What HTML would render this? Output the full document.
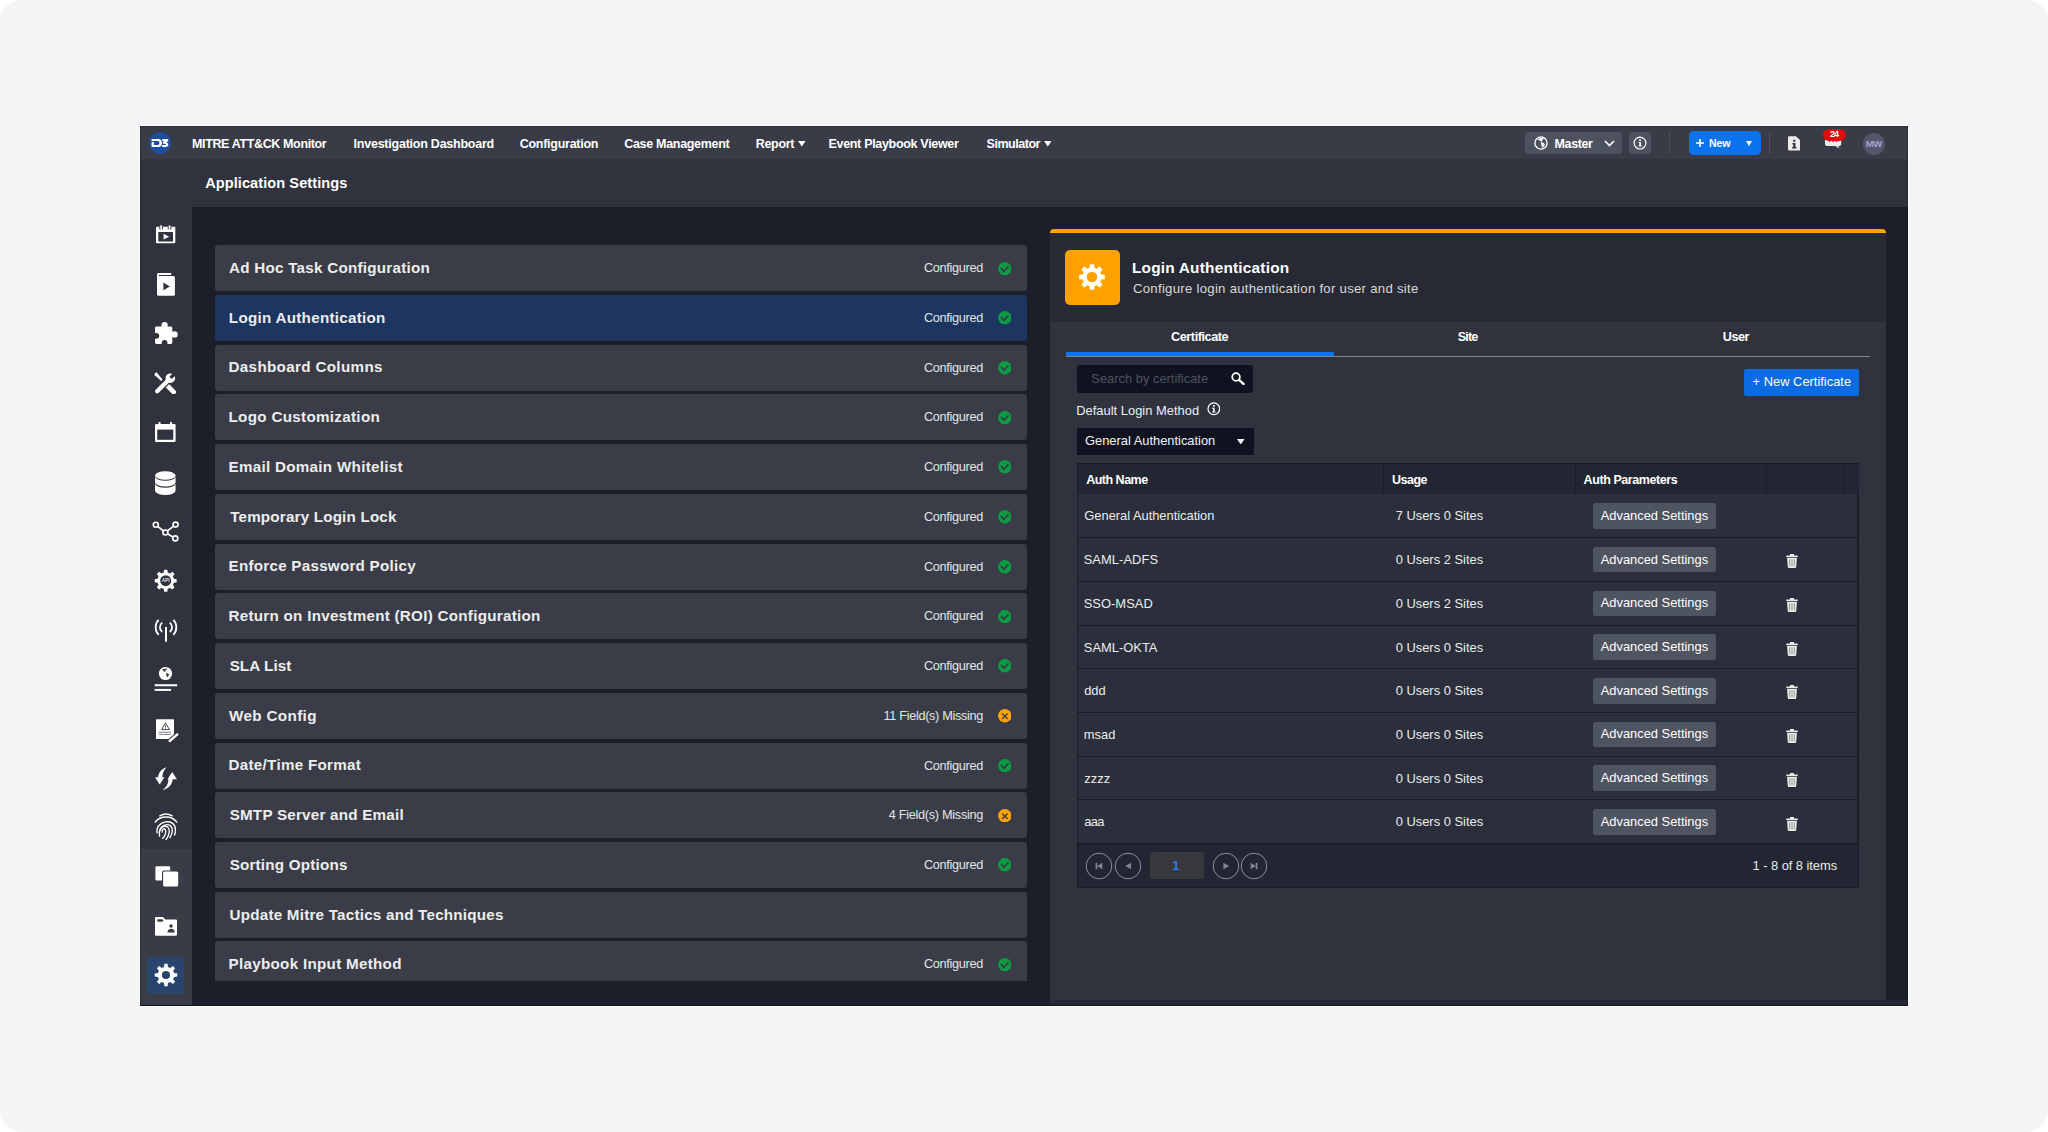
<!DOCTYPE html>
<html lang="en"><head><meta charset="utf-8"><title>Application Settings - Login Authentication</title>
<style>
html,body{margin:0;padding:0;background:#fff;}
body{width:2048px;height:1132px;position:relative;overflow:hidden;font-family:"Liberation Sans", sans-serif;}
#cv{position:absolute;left:0;top:0;width:2048px;height:1132px;background:#f3f4f6;border-radius:22px;overflow:hidden;}
#cv div,#cv svg,#cv span.t{position:absolute;display:block;}
#cv span.t{white-space:pre;}
</style></head>
<body>
<div id="cv">
<div style="left:139px;top:125px;width:1770px;height:882px;background:#ffffff;"></div>
<div style="left:140px;top:126px;width:1768px;height:880px;background:#1c1f2a;"></div>
<div style="left:140px;top:126px;width:1768px;height:33px;background:#393c46;"></div>
<div style="left:140px;top:159px;width:1768px;height:48px;background:#30333d;"></div>
<div style="left:140px;top:207px;width:51.5px;height:799px;background:#30333d;"></div>
<div style="left:140px;top:849px;width:51.5px;height:157px;background:#393c46;"></div>
<div style="left:140px;top:1004.5px;width:1768px;height:1.5px;background:#181b26;"></div>
<svg style="left:149px;top:132px;" width="22" height="22" viewBox="0 0 22 22"><circle cx="11" cy="11" r="11" fill="#1f4e9c"/><path d="M2.600 7h6.800c2.300 0 3.500 1.300 3.500 3.900 0 2.700-1.200 4.100-3.500 4.100H2.600V10h2.300v3h4.100c.9 0 1.400-.7 1.400-2s-.5-2-1.400-2H2.600z" fill="#fff"/><path d="M13.300 7h5.900v2l-2 1.500c1.400.1 2.100.9 2.100 2.100 0 1.600-1 2.400-3 2.400h-3.100v-2h3c.5 0 .8-.2.800-.6s-.3-.6-.8-.6h-2.400V9.900L15.600 9h-2.300z" fill="#fff"/></svg>
<svg style="left:798px;top:141.3px;" width="7.6" height="5.6" viewBox="0 0 8 6"><path d="M0 0h8L4 6z" fill="#fff"/></svg>
<svg style="left:1044.4px;top:141.3px;" width="7.6" height="5.6" viewBox="0 0 8 6"><path d="M0 0h8L4 6z" fill="#fff"/></svg>
<div style="left:1525px;top:132px;width:96.5px;height:22px;background:#4d525f;border-radius:3px;"></div>
<svg style="left:1533.5px;top:135.9px;" width="14" height="14" viewBox="0 0 14 14"><circle cx="7" cy="7" r="6.100" fill="none" stroke="#fff" stroke-width="1.300"/><path d="M3.300 3.500Q6 1.200 9.900 1.900L7.300 5.900Q5.600 4 3.300 3.500z" fill="#fff"/><path d="M7 6.100Q9.600 6.300 11 8.300Q10.300 10.600 8.500 12L7.300 9.200z" fill="#fff"/></svg>
<svg style="left:1603.5px;top:139.5px;" width="11" height="7" viewBox="0 0 11 7"><path d="M1 1l4.500 4.500L10 1" fill="none" stroke="#fff" stroke-width="1.600"/></svg>
<div style="left:1629px;top:132px;width:22px;height:22px;background:#4d525f;border-radius:3px;"></div>
<svg style="left:1633px;top:136px;" width="14" height="14" viewBox="0 0 14 14"><circle cx="7" cy="7.100" r="5.900" fill="none" stroke="#fff" stroke-width="1.200"/><path d="M6.200 3.300h1.700v1.700H6.200zM5.500 6h2.400v3.600h.8v1H5.500v-1h.8V7h-.8z" fill="#fff"/></svg>
<div style="left:1669px;top:132px;width:1px;height:22px;background:#4b4f5b;"></div>
<div style="left:1689px;top:131px;width:71.8px;height:24px;background:#0b72f0;border-radius:4.5px;"></div>
<svg style="left:1696px;top:139px;" width="8" height="8" viewBox="0 0 8 8"><path d="M3.200 0h1.600v3.200H8v1.600H4.800V8H3.200V4.800H0V3.200h3.200z" fill="#fff"/></svg>
<svg style="left:1746px;top:141px;" width="6" height="5" viewBox="0 0 6 5"><path d="M0 0h6L3 5z" fill="#fff"/></svg>
<div style="left:1769px;top:132px;width:1px;height:22px;background:#4b4f5b;"></div>
<svg style="left:1787.7px;top:136px;" width="12.5" height="14.8" viewBox="0 0 13 15"><path d="M1.300 0h6.900l4.800 4.500V13.700c0 .7-.6 1.300-1.300 1.300H1.300C.6 15 0 14.400 0 13.700V1.300C0 .6.600 0 1.300 0z" fill="#ececec"/><path d="M5.300 3.700h2.300v2H5.300zM4.500 7h3.300v4.300h1v1.400H4.300v-1.400h1V8.400h-.8z" fill="#393c46"/></svg>
<svg style="left:1825px;top:136.8px;" width="16.9" height="11.8" viewBox="0 0 18 12"><path d="M2.500 0h12.300c1.400 0 2.500 1.100 2.500 2.500v4.300c0 1.400-1.100 2.500-2.500 2.500h-.6l.9 2.700-4-2.700H2.500C1.100 9.300 0 8.200 0 6.800V2.500C0 1.100 1.100 0 2.500 0z" fill="#ececec"/><path d="M4 3h2v1.700H4zM7.700 3h2v1.700h-2zM11.400 3h2v1.700h-2z" fill="#393c46"/></svg>
<div style="left:1823px;top:129px;width:22.5px;height:11.6px;background:#e00b0b;border-radius:6px;"></div>
<div style="left:1863.2px;top:133.1px;width:21.6px;height:21.6px;background:#55566a;border-radius:11px;"></div>
<div style="left:214.5px;top:245px;width:812.5px;height:46px;background:#3a3d47;border-radius:3px;"></div>
<svg style="left:997.8px;top:261.5px;" width="13.6" height="13.6" viewBox="0 0 13.6 13.6"><circle cx="6.800" cy="6.800" r="6.700" fill="#0c9a45"/><path d="M3 6l2.900 3.300 4.600-5.100" fill="none" stroke="#363b46" stroke-width="1.700"/></svg>
<div style="left:214.5px;top:294.75px;width:812.5px;height:46px;background:#1c3661;border-radius:3px;"></div>
<svg style="left:997.8px;top:311.24px;" width="13.6" height="13.6" viewBox="0 0 13.6 13.6"><circle cx="6.800" cy="6.800" r="6.700" fill="#0c9a45"/><path d="M3 6l2.900 3.300 4.600-5.100" fill="none" stroke="#363b46" stroke-width="1.700"/></svg>
<div style="left:214.5px;top:344.5px;width:812.5px;height:46px;background:#3a3d47;border-radius:3px;"></div>
<svg style="left:997.8px;top:360.98px;" width="13.6" height="13.6" viewBox="0 0 13.6 13.6"><circle cx="6.800" cy="6.800" r="6.700" fill="#0c9a45"/><path d="M3 6l2.900 3.300 4.600-5.100" fill="none" stroke="#363b46" stroke-width="1.700"/></svg>
<div style="left:214.5px;top:394.25px;width:812.5px;height:46px;background:#3a3d47;border-radius:3px;"></div>
<svg style="left:997.8px;top:410.72px;" width="13.6" height="13.6" viewBox="0 0 13.6 13.6"><circle cx="6.800" cy="6.800" r="6.700" fill="#0c9a45"/><path d="M3 6l2.900 3.300 4.600-5.100" fill="none" stroke="#363b46" stroke-width="1.700"/></svg>
<div style="left:214.5px;top:444px;width:812.5px;height:46px;background:#3a3d47;border-radius:3px;"></div>
<svg style="left:997.8px;top:460.46px;" width="13.6" height="13.6" viewBox="0 0 13.6 13.6"><circle cx="6.800" cy="6.800" r="6.700" fill="#0c9a45"/><path d="M3 6l2.900 3.300 4.600-5.100" fill="none" stroke="#363b46" stroke-width="1.700"/></svg>
<div style="left:214.5px;top:493.75px;width:812.5px;height:46px;background:#3a3d47;border-radius:3px;"></div>
<svg style="left:997.8px;top:510.2px;" width="13.6" height="13.6" viewBox="0 0 13.6 13.6"><circle cx="6.800" cy="6.800" r="6.700" fill="#0c9a45"/><path d="M3 6l2.900 3.300 4.600-5.100" fill="none" stroke="#363b46" stroke-width="1.700"/></svg>
<div style="left:214.5px;top:543.5px;width:812.5px;height:46px;background:#3a3d47;border-radius:3px;"></div>
<svg style="left:997.8px;top:559.94px;" width="13.6" height="13.6" viewBox="0 0 13.6 13.6"><circle cx="6.800" cy="6.800" r="6.700" fill="#0c9a45"/><path d="M3 6l2.900 3.300 4.600-5.100" fill="none" stroke="#363b46" stroke-width="1.700"/></svg>
<div style="left:214.5px;top:593.25px;width:812.5px;height:46px;background:#3a3d47;border-radius:3px;"></div>
<svg style="left:997.8px;top:609.68px;" width="13.6" height="13.6" viewBox="0 0 13.6 13.6"><circle cx="6.800" cy="6.800" r="6.700" fill="#0c9a45"/><path d="M3 6l2.900 3.300 4.600-5.100" fill="none" stroke="#363b46" stroke-width="1.700"/></svg>
<div style="left:214.5px;top:643px;width:812.5px;height:46px;background:#3a3d47;border-radius:3px;"></div>
<svg style="left:997.8px;top:659.42px;" width="13.6" height="13.6" viewBox="0 0 13.6 13.6"><circle cx="6.800" cy="6.800" r="6.700" fill="#0c9a45"/><path d="M3 6l2.900 3.300 4.600-5.100" fill="none" stroke="#363b46" stroke-width="1.700"/></svg>
<div style="left:214.5px;top:692.75px;width:812.5px;height:46px;background:#3a3d47;border-radius:3px;"></div>
<svg style="left:997.8px;top:709.16px;" width="13.6" height="13.6" viewBox="0 0 13.6 13.6"><circle cx="6.800" cy="6.800" r="6.700" fill="#ffa406"/><path d="M4.100 4.400l5.600 5.500M9.700 4.400l-5.600 5.500" fill="none" stroke="#40414a" stroke-width="1.450"/></svg>
<div style="left:214.5px;top:742.5px;width:812.5px;height:46px;background:#3a3d47;border-radius:3px;"></div>
<svg style="left:997.8px;top:758.9px;" width="13.6" height="13.6" viewBox="0 0 13.6 13.6"><circle cx="6.800" cy="6.800" r="6.700" fill="#0c9a45"/><path d="M3 6l2.900 3.300 4.600-5.100" fill="none" stroke="#363b46" stroke-width="1.700"/></svg>
<div style="left:214.5px;top:792.25px;width:812.5px;height:46px;background:#3a3d47;border-radius:3px;"></div>
<svg style="left:997.8px;top:808.64px;" width="13.6" height="13.6" viewBox="0 0 13.6 13.6"><circle cx="6.800" cy="6.800" r="6.700" fill="#ffa406"/><path d="M4.100 4.400l5.600 5.500M9.700 4.400l-5.600 5.500" fill="none" stroke="#40414a" stroke-width="1.450"/></svg>
<div style="left:214.5px;top:842px;width:812.5px;height:46px;background:#3a3d47;border-radius:3px;"></div>
<svg style="left:997.8px;top:858.38px;" width="13.6" height="13.6" viewBox="0 0 13.6 13.6"><circle cx="6.800" cy="6.800" r="6.700" fill="#0c9a45"/><path d="M3 6l2.900 3.300 4.600-5.100" fill="none" stroke="#363b46" stroke-width="1.700"/></svg>
<div style="left:214.5px;top:891.5px;width:812.5px;height:46px;background:#3a3d47;border-radius:3px;"></div>
<div style="left:214.5px;top:941.25px;width:812.5px;height:39.64px;background:#3a3d47;border-radius:3px 3px 0 0;"></div>
<svg style="left:997.8px;top:957.86px;" width="13.6" height="13.6" viewBox="0 0 13.6 13.6"><circle cx="6.800" cy="6.800" r="6.700" fill="#0c9a45"/><path d="M3 6l2.900 3.300 4.600-5.100" fill="none" stroke="#363b46" stroke-width="1.700"/></svg>
<div style="left:1050px;top:229px;width:836px;height:92.5px;background:#272a34;border-top:4px solid #ffa200;box-sizing:border-box;border-radius:4px 4px 0 0;"></div>
<div style="left:1050px;top:321.5px;width:836px;height:678.5px;background:#30333d;"></div>
<div style="left:1050px;top:1000px;width:858px;height:4.5px;background:#272a34;"></div>
<div style="left:1064.5px;top:249.8px;width:55.5px;height:55.2px;background:#ffa200;border-radius:5px;"></div>
<svg style="left:1078px;top:263.3px;" width="28" height="28" viewBox="0 0 28 28"><path d="M23.16 11.49L26.82 11.87L26.82 16.13L23.16 16.51L22.25 18.71L24.58 21.56L21.56 24.58L18.71 22.25L16.51 23.16L16.13 26.82L11.87 26.82L11.49 23.16L9.29 22.25L6.44 24.58L3.42 21.56L5.75 18.71L4.84 16.51L1.18 16.13L1.18 11.87L4.84 11.49L5.75 9.29L3.42 6.44L6.44 3.42L9.29 5.75L11.49 4.84L11.87 1.18L16.13 1.18L16.51 4.84L18.71 5.75L21.56 3.42L24.58 6.44L22.25 9.29zM19.20 14.00a5.20 5.20 0 1 0 -10.40 0a5.20 5.20 0 1 0 10.40 0z" fill="#fff" fill-rule="evenodd"/></svg>
<div style="left:1065.5px;top:356px;width:804.5px;height:1px;background:#80838a;"></div>
<div style="left:1065.5px;top:352px;width:268px;height:4.3px;background:#0b72f0;"></div>
<div style="left:1076.5px;top:365px;width:176.6px;height:27.5px;background:#10131f;border-radius:3px;"></div>
<svg style="left:1231px;top:372.3px;" width="14" height="13" viewBox="0 0 15 14"><circle cx="5.400" cy="5.400" r="4.100" fill="none" stroke="#fff" stroke-width="1.900"/><path d="M8.600 8.500l5 4.500" stroke="#fff" stroke-width="2.400" stroke-linecap="round"/></svg>
<div style="left:1744.3px;top:369px;width:114.7px;height:26.7px;background:#0b6be3;border-radius:2px;"></div>
<svg style="left:1206.7px;top:402px;" width="13.6" height="13.6" viewBox="0 0 14 14"><circle cx="7" cy="7" r="6" fill="none" stroke="#fff" stroke-width="1.300"/><path d="M6.200 3.200h1.700v1.700H6.200zM5.400 6h2.500v3.700h.9v1H5.400v-1h.9V7h-.9z" fill="#fff"/></svg>
<div style="left:1076.5px;top:427.8px;width:177.5px;height:27px;background:#10131f;"></div>
<svg style="left:1237px;top:438.5px;" width="7.5" height="5.5" viewBox="0 0 7.5 5.5"><path d="M0 0h7.500L3.750 5.500z" fill="#fff"/></svg>
<div style="left:1077px;top:463px;width:781.5px;height:424.5px;background:#1a1d27;"></div>
<div style="left:1078px;top:464px;width:780.5px;height:30px;background:#222632;"></div>
<div style="left:1383px;top:464px;width:1px;height:30px;background:#1a1d27;"></div>
<div style="left:1575px;top:464px;width:1px;height:30px;background:#1a1d27;"></div>
<div style="left:1766.2px;top:464px;width:1px;height:30px;background:#1a1d27;"></div>
<div style="left:1843px;top:464px;width:1px;height:30px;background:#1a1d27;"></div>
<div style="left:1078px;top:494px;width:779px;height:43px;background:#2b2f3b;"></div>
<div style="left:1593.1px;top:503.1px;width:122.8px;height:25.6px;background:#4f5461;border-radius:2.5px;"></div>
<div style="left:1078px;top:538px;width:779px;height:43px;background:#2b2f3b;"></div>
<div style="left:1593.1px;top:546.81px;width:122.8px;height:25.6px;background:#4f5461;border-radius:2.5px;"></div>
<svg style="left:1786px;top:554.31px;" width="12" height="14" viewBox="0 0 12 14"><path d="M4 0h4v1.600h3.700v1.700H.3V1.600H4z" fill="#e9e9e9"/><path d="M1.100 4.100h9.800l-.7 9.100c0 .4-.4.800-.8.800H2.600c-.4 0-.8-.4-.8-.8z" fill="#e9e9e9"/><path d="M3.700 5.300v7M6 5.300v7M8.300 5.300v7" stroke="#8d8f86" stroke-width=".9"/></svg>
<div style="left:1078px;top:582px;width:779px;height:43px;background:#2b2f3b;"></div>
<div style="left:1593.1px;top:590.52px;width:122.8px;height:25.6px;background:#4f5461;border-radius:2.5px;"></div>
<svg style="left:1786px;top:598.02px;" width="12" height="14" viewBox="0 0 12 14"><path d="M4 0h4v1.600h3.700v1.700H.3V1.600H4z" fill="#e9e9e9"/><path d="M1.100 4.100h9.800l-.7 9.100c0 .4-.4.800-.8.800H2.600c-.4 0-.8-.4-.8-.8z" fill="#e9e9e9"/><path d="M3.700 5.300v7M6 5.300v7M8.300 5.300v7" stroke="#8d8f86" stroke-width=".9"/></svg>
<div style="left:1078px;top:626px;width:779px;height:42px;background:#2b2f3b;"></div>
<div style="left:1593.1px;top:634.23px;width:122.8px;height:25.6px;background:#4f5461;border-radius:2.5px;"></div>
<svg style="left:1786px;top:641.73px;" width="12" height="14" viewBox="0 0 12 14"><path d="M4 0h4v1.600h3.700v1.700H.3V1.600H4z" fill="#e9e9e9"/><path d="M1.100 4.100h9.800l-.7 9.100c0 .4-.4.800-.8.800H2.600c-.4 0-.8-.4-.8-.8z" fill="#e9e9e9"/><path d="M3.700 5.300v7M6 5.300v7M8.300 5.300v7" stroke="#8d8f86" stroke-width=".9"/></svg>
<div style="left:1078px;top:669px;width:779px;height:43px;background:#2b2f3b;"></div>
<div style="left:1593.1px;top:677.94px;width:122.8px;height:25.6px;background:#4f5461;border-radius:2.5px;"></div>
<svg style="left:1786px;top:685.44px;" width="12" height="14" viewBox="0 0 12 14"><path d="M4 0h4v1.600h3.700v1.700H.3V1.600H4z" fill="#e9e9e9"/><path d="M1.100 4.100h9.800l-.7 9.100c0 .4-.4.800-.8.800H2.600c-.4 0-.8-.4-.8-.8z" fill="#e9e9e9"/><path d="M3.700 5.300v7M6 5.300v7M8.300 5.300v7" stroke="#8d8f86" stroke-width=".9"/></svg>
<div style="left:1078px;top:713px;width:779px;height:43px;background:#2b2f3b;"></div>
<div style="left:1593.1px;top:721.65px;width:122.8px;height:25.6px;background:#4f5461;border-radius:2.5px;"></div>
<svg style="left:1786px;top:729.15px;" width="12" height="14" viewBox="0 0 12 14"><path d="M4 0h4v1.600h3.700v1.700H.3V1.600H4z" fill="#e9e9e9"/><path d="M1.100 4.100h9.800l-.7 9.100c0 .4-.4.800-.8.800H2.600c-.4 0-.8-.4-.8-.8z" fill="#e9e9e9"/><path d="M3.700 5.300v7M6 5.300v7M8.300 5.300v7" stroke="#8d8f86" stroke-width=".9"/></svg>
<div style="left:1078px;top:757px;width:779px;height:42px;background:#2b2f3b;"></div>
<div style="left:1593.1px;top:765.36px;width:122.8px;height:25.6px;background:#4f5461;border-radius:2.5px;"></div>
<svg style="left:1786px;top:772.86px;" width="12" height="14" viewBox="0 0 12 14"><path d="M4 0h4v1.600h3.700v1.700H.3V1.600H4z" fill="#e9e9e9"/><path d="M1.100 4.100h9.800l-.7 9.100c0 .4-.4.800-.8.800H2.600c-.4 0-.8-.4-.8-.8z" fill="#e9e9e9"/><path d="M3.700 5.300v7M6 5.300v7M8.300 5.300v7" stroke="#8d8f86" stroke-width=".9"/></svg>
<div style="left:1078px;top:800px;width:779px;height:43px;background:#2b2f3b;"></div>
<div style="left:1593.1px;top:809.07px;width:122.8px;height:25.6px;background:#4f5461;border-radius:2.5px;"></div>
<svg style="left:1786px;top:816.57px;" width="12" height="14" viewBox="0 0 12 14"><path d="M4 0h4v1.600h3.700v1.700H.3V1.600H4z" fill="#e9e9e9"/><path d="M1.100 4.100h9.800l-.7 9.100c0 .4-.4.800-.8.800H2.600c-.4 0-.8-.4-.8-.8z" fill="#e9e9e9"/><path d="M3.700 5.300v7M6 5.300v7M8.300 5.300v7" stroke="#8d8f86" stroke-width=".9"/></svg>
<div style="left:1078px;top:845px;width:779.5px;height:41.5px;background:#222632;"></div>
<svg style="left:1085.1px;top:851.9px;" width="28" height="28" viewBox="0 0 28 28"><circle cx="14" cy="14" r="12.800" fill="none" stroke="#8b8e9a" stroke-width="1"/><path d="M10.600 10.700h1.700v6.600h-1.700zM17.300 10.700v6.600L12.300 14z" fill="#80859a"/></svg>
<svg style="left:1113.5px;top:851.9px;" width="28" height="28" viewBox="0 0 28 28"><circle cx="14" cy="14" r="12.800" fill="none" stroke="#8b8e9a" stroke-width="1"/><path d="M17 10.700v6.600L11.300 14z" fill="#80859a"/></svg>
<svg style="left:1211.8px;top:851.9px;" width="28" height="28" viewBox="0 0 28 28"><circle cx="14" cy="14" r="12.800" fill="none" stroke="#8b8e9a" stroke-width="1"/><path d="M11.400 10.700v6.600L17.100 14z" fill="#80859a"/></svg>
<svg style="left:1239.5px;top:851.9px;" width="28" height="28" viewBox="0 0 28 28"><circle cx="14" cy="14" r="12.800" fill="none" stroke="#8b8e9a" stroke-width="1"/><path d="M15.700 10.700h1.700v6.600h-1.700zM10.700 10.700v6.600L15.700 14z" fill="#80859a"/></svg>
<div style="left:1149.5px;top:852.1px;width:54.6px;height:27.3px;background:#38393c;border-radius:3px;"></div>
<svg style="left:156px;top:225px;" width="20" height="19" viewBox="0 0 20 19"><rect x="0" y="1.800" width="19.300" height="16.400" rx=".8" fill="#fff"/><rect x="2.300" y="7" width="14.700" height="9.500" fill="#30333d"/><rect x="3.300" y="1.800" width="3.600" height="2.500" fill="#30333d"/><rect x="11.700" y="1.800" width="3.600" height="2.500" fill="#30333d"/><rect x="4.300" y=".3" width="1.600" height="4" fill="#fff"/><rect x="12.700" y=".3" width="1.600" height="4" fill="#fff"/><path d="M7.600 8.800l5.600 2.900-5.600 2.900z" fill="#fff"/></svg>
<svg style="left:156.5px;top:272.5px;" width="18" height="23" viewBox="0 0 18 23"><rect x="0" y="2.900" width="17.900" height="19.800" rx="1.500" fill="#fff"/><rect x=".2" y="0" width="14.200" height="1.900" rx=".9" fill="#fff"/><rect x="0" y=".9" width="1.700" height="5" rx=".8" fill="#fff"/><path d="M6.400 9.600l6.500 3.800-6.500 3.800z" fill="#30333d"/></svg>
<svg style="left:155px;top:322px;" width="23" height="22" viewBox="0 0 23 22"><rect x="0" y="4.600" width="17.300" height="17.400" rx="1.400" fill="#fff"/><circle cx="9.600" cy="3.200" r="3.100" fill="#fff"/><rect x="7.600" y="3" width="4" height="3" fill="#fff"/><circle cx="19.500" cy="12.400" r="3.200" fill="#fff"/><rect x="16" y="10.400" width="3.500" height="4" fill="#fff"/><circle cx="1.300" cy="13.800" r="2.900" fill="#30333d"/><rect x="0" y="12.300" width="1.500" height="3" fill="#30333d"/><circle cx="9.600" cy="20.800" r="2.900" fill="#30333d"/><rect x="8.100" y="20.500" width="3" height="1.500" fill="#30333d"/></svg>
<svg style="left:153.8px;top:371.5px;" width="23" height="22" viewBox="0 0 23 22"><path d="M.6 1.500l2.100-1.300 1.600 2.400 4.300 5-1.400 1.300-4.900-4.400-1.500-.8z" fill="#fff"/><path d="M13.800 14.200l5.900 5.900" stroke="#fff" stroke-width="4.700" stroke-linecap="round"/><path d="M3.200 19.300l10.600-10.600" stroke="#30333d" stroke-width="6.800" stroke-linecap="round"/><path d="M3.200 19.300l10.600-10.600" stroke="#fff" stroke-width="4.300" stroke-linecap="round"/><circle cx="16.300" cy="6.200" r="4.800" fill="#fff"/><path d="M16.600 5.900l5.600-5.600" stroke="#30333d" stroke-width="3.400"/></svg>
<svg style="left:154.9px;top:422px;" width="21" height="20" viewBox="0 0 21 20"><rect x="0" y="2.100" width="20.600" height="17.800" rx="1.200" fill="#fff"/><rect x="2.200" y="7.600" width="16.100" height="10.200" fill="#30333d"/><rect x="3.600" y="0" width="1.900" height="3" fill="#fff"/><rect x="15.100" y="0" width="1.900" height="3" fill="#fff"/></svg>
<svg style="left:154.9px;top:470.5px;" width="21" height="24" viewBox="0 0 21 24"><ellipse cx="10.300" cy="4.500" rx="10.300" ry="4.300" fill="#fff"/><path d="M0 5.500A10.300 4.300 0 0 0 20.600 5.500V11.300A10.300 4.300 0 0 1 0 11.300z" fill="#fff"/><path d="M0 12.400A10.300 4.300 0 0 0 20.600 12.400V19.600A10.300 4.300 0 0 1 0 19.600z" fill="#fff"/></svg>
<svg style="left:152px;top:520px;" width="28" height="23" viewBox="0 0 28 23"><path d="M3.800 4.800l9.600 7.700L23.600 4.600M13.400 12.500l9.900 5.900" fill="none" stroke="#fff" stroke-width="1.700"/><circle cx="3.8" cy="4.8" r="2.500" fill="#30333d" stroke="#fff" stroke-width="1.600"/><circle cx="13.4" cy="12.5" r="2.500" fill="#30333d" stroke="#fff" stroke-width="1.600"/><circle cx="23.6" cy="4.6" r="2.500" fill="#30333d" stroke="#fff" stroke-width="1.600"/><circle cx="23.3" cy="18.4" r="2.500" fill="#30333d" stroke="#fff" stroke-width="1.600"/></svg>
<svg style="left:154px;top:568.5px;" width="24" height="24" viewBox="0 0 24 24"><path d="M19.85 9.67L22.69 10.14L22.69 13.26L19.85 13.73L18.90 16.03L20.58 18.36L18.36 20.58L16.03 18.90L13.73 19.85L13.26 22.69L10.14 22.69L9.67 19.85L7.37 18.90L5.04 20.58L2.82 18.36L4.50 16.03L3.55 13.73L0.71 13.26L0.71 10.14L3.55 9.67L4.50 7.37L2.82 5.04L5.04 2.82L7.37 4.50L9.67 3.55L10.14 0.71L13.26 0.71L13.73 3.55L16.03 4.50L18.36 2.82L20.58 5.04L18.90 7.37zM11.71 11.70a0.01 0.01 0 1 0 -0.02 0a0.01 0.01 0 1 0 0.02 0z" fill="#fff" fill-rule="evenodd"/><circle cx="11.700" cy="11.700" r="5.500" fill="#30333d"/><text x="11.700" y="13.300" text-anchor="middle" font-family="Liberation Sans, sans-serif" font-size="4.500" font-weight="bold" fill="#e6e6e6">API</text></svg>
<svg style="left:153.6px;top:618px;" width="24" height="24" viewBox="0 0 24 24"><path d="M12 9v14.800" stroke="#fff" stroke-width="2"/><path d="M8.200 4.600A6 6 0 0 0 8.200 14M15.800 4.600A6 6 0 0 1 15.800 14M4.600 1.800A11 11 0 0 0 4.600 16.800M19.400 1.800A11 11 0 0 1 19.400 16.800" fill="none" stroke="#fff" stroke-width="1.800"/></svg>
<svg style="left:154px;top:666px;" width="24" height="26" viewBox="0 0 24 26"><circle cx="11.500" cy="7.500" r="6.600" fill="#fff"/><path d="M8 3.300L13.200 2.400 10.500 6z" fill="#30333d"/><path d="M12 6.400L15.300 8.500 12.900 11.500z" fill="#30333d"/><rect x=".7" y="18.200" width="22.400" height="2.100" fill="#fff"/><rect x=".7" y="22.900" width="16.400" height="2" fill="#fff"/></svg>
<svg style="left:156px;top:719px;" width="23" height="24" viewBox="0 0 23 24"><rect x="0" y=".3" width="18" height="19.700" rx=".8" fill="#fff"/><path d="M9.500 3.800l3.900 6.800H5.600z" fill="none" stroke="#30333d" stroke-width=".9"/><rect x="9.100" y="6.300" width=".8" height="2.300" fill="#30333d"/><rect x="9.100" y="9.100" width=".8" height=".8" fill="#30333d"/><rect x="2.700" y="12.700" width="12.400" height="1.100" fill="#8a8c93"/><rect x="2.700" y="14.800" width="12.400" height="1.100" fill="#8a8c93"/><path d="M13.700 22l7.600-6.600" stroke="#30333d" stroke-width="4.600" stroke-linecap="round"/><path d="M13.700 22l7.600-6.600" stroke="#fff" stroke-width="2.400" stroke-linecap="round"/></svg>
<svg style="left:155px;top:766.5px;" width="22" height="23" viewBox="0 0 22 23"><path d="M11.600 .2C6 1.900 2.800 6.300 3.100 11.800h4.300C7 7.200 8.400 3.200 11.600 .2z" fill="#fff"/><path d="M0 10.300h9.400l-4.700 7.100z" fill="#fff"/><path d="M7.600 22.900c5.600-1.100 10.200-5.400 10.100-11.700h-4.300c.3 4.700-1.500 8.800-5.800 11.700z" fill="#fff"/><path d="M12.500 12.200h9.400l-4.700-7.100z" fill="#fff"/></svg>
<svg style="left:154px;top:813px;" width="24" height="28" viewBox="0 0 24 28"><g fill="none" stroke="#fff" stroke-width="1.350" stroke-linecap="round"><path d="M5.800 2.900C9.600.6 14.400.6 18.200 2.900"/><path d="M1.200 9.200C6.200 2.300 17.800 2.300 22.800 9.200"/><path d="M3.200 19.800C.6 8 21.500 3.600 21.400 17c0 2-.3 3.500-.8 5"/><path d="M5.600 23.200C2.600 11.500 18.300 7.400 18.300 17.200c0 2.800-1 5.500-2.400 7.400"/><path d="M8.600 25.400c2.600-2.200 4.200-7.400 2.600-9-1.500-1.500-3.600.3-3 2.600"/><path d="M12 26.500c2.500-2.800 4.200-8.500 2.500-11.500-1.800-3-7.800-2.100-8.300 2.200"/></g></svg>
<svg style="left:154.5px;top:866px;" width="24" height="21" viewBox="0 0 24 21"><rect x=".4" y=".2" width="14.800" height="14.300" rx="1.300" fill="#fff"/><rect x="7" y="4.400" width="17" height="16.600" rx="2" fill="#393c46"/><rect x="8.100" y="5.500" width="15.100" height="15.100" rx="1.500" fill="#fff"/></svg>
<svg style="left:154.8px;top:917px;" width="22.4" height="19.5" viewBox="0 0 23 20"><path d="M1.300 0h6.900l2.300 2.500h11c.7 0 1.300.6 1.300 1.300v14.100c0 .7-.6 1.300-1.300 1.300H1.300C.6 19.200 0 18.600 0 17.900V1.300C0 .6.600 0 1.300 0z" fill="#fff"/><path d="M2.500 2.300h5l1.400 1.400-1.400 1.200h-5z" fill="#393c46"/><circle cx="16.500" cy="9.200" r="1.800" fill="#393c46"/><path d="M12.700 16c0-2.600 1.600-3.900 3.800-3.900s3.800 1.300 3.800 3.900z" fill="#393c46"/></svg>
<div style="left:147.1px;top:957px;width:36.8px;height:36.8px;background:#29456f;border-radius:3px;"></div>
<svg style="left:153.8px;top:963.4px;" width="24" height="24" viewBox="0 0 24 24"><path d="M20.06 10.00L23.29 10.39L23.29 13.61L20.06 14.00L19.11 16.28L21.12 18.84L18.84 21.12L16.28 19.11L14.00 20.06L13.61 23.29L10.39 23.29L10.00 20.06L7.72 19.11L5.16 21.12L2.88 18.84L4.89 16.28L3.94 14.00L0.71 13.61L0.71 10.39L3.94 10.00L4.89 7.72L2.88 5.16L5.16 2.88L7.72 4.89L10.00 3.94L10.39 0.71L13.61 0.71L14.00 3.94L16.28 4.89L18.84 2.88L21.12 5.16L19.11 7.72zM16.10 12.00a4.10 4.10 0 1 0 -8.20 0a4.10 4.10 0 1 0 8.20 0z" fill="#fff" fill-rule="evenodd"/></svg>
<div style="left:140px;top:126px;width:1768px;height:880px;box-shadow:inset 0 0 0 1px rgba(8,10,24,.3);"></div>
<span class="t" style="left:192.00px;top:136.00px;height:16px;line-height:16px;font-size:12.5px;color:#fff;font-weight:bold;letter-spacing:-0.365px;">MITRE ATT&amp;CK Monitor</span>
<span class="t" style="left:353.60px;top:136.00px;height:16px;line-height:16px;font-size:12.5px;color:#fff;font-weight:bold;letter-spacing:-0.237px;">Investigation Dashboard</span>
<span class="t" style="left:519.66px;top:136.00px;height:16px;line-height:16px;font-size:12.5px;color:#fff;font-weight:bold;letter-spacing:-0.258px;">Configuration</span>
<span class="t" style="left:624.26px;top:136.00px;height:16px;line-height:16px;font-size:12.5px;color:#fff;font-weight:bold;letter-spacing:-0.310px;">Case Management</span>
<span class="t" style="left:755.81px;top:136.00px;height:16px;line-height:16px;font-size:12.5px;color:#fff;font-weight:bold;letter-spacing:-0.343px;">Report</span>
<span class="t" style="left:828.50px;top:136.00px;height:16px;line-height:16px;font-size:12.5px;color:#fff;font-weight:bold;letter-spacing:-0.313px;">Event Playbook Viewer</span>
<span class="t" style="left:986.50px;top:136.00px;height:16px;line-height:16px;font-size:12.5px;color:#fff;font-weight:bold;letter-spacing:-0.460px;">Simulator</span>
<span class="t" style="left:205.20px;top:174.00px;height:19px;line-height:19px;font-size:14.6px;color:#fff;font-weight:bold;letter-spacing:0.055px;">Application Settings</span>
<span class="t" style="left:1554.60px;top:136.00px;height:16px;line-height:16px;font-size:12.5px;color:#fff;font-weight:bold;letter-spacing:-0.406px;">Master</span>
<span class="t" style="left:1709.08px;top:136.00px;height:14px;line-height:14px;font-size:10.6px;color:#fff;font-weight:bold;letter-spacing:-0.231px;">New</span>
<span class="t" style="left:1829.93px;top:128.00px;height:12px;line-height:12px;font-size:9px;color:#fff;font-weight:bold;letter-spacing:-0.805px;">24</span>
<span class="t" style="left:1865.75px;top:138.00px;height:12px;line-height:12px;font-size:9.5px;color:#a3a3d6;font-weight:bold;letter-spacing:-0.414px;">MW</span>
<span class="t" style="left:229.00px;top:258.00px;height:20px;line-height:20px;font-size:15.2px;color:#ededed;font-weight:bold;letter-spacing:0.256px;">Ad Hoc Task Configuration</span>
<span class="t" style="left:923.98px;top:260.00px;height:17px;line-height:17px;font-size:12.7px;color:#e4e4e4;letter-spacing:-0.308px;">Configured</span>
<span class="t" style="left:228.85px;top:308.00px;height:20px;line-height:20px;font-size:15.2px;color:#ededed;font-weight:bold;letter-spacing:0.275px;">Login Authentication</span>
<span class="t" style="left:923.98px;top:310.00px;height:17px;line-height:17px;font-size:12.7px;color:#e4e4e4;letter-spacing:-0.308px;">Configured</span>
<span class="t" style="left:228.50px;top:357.00px;height:20px;line-height:20px;font-size:15.2px;color:#ededed;font-weight:bold;letter-spacing:0.339px;">Dashboard Columns</span>
<span class="t" style="left:923.98px;top:360.00px;height:17px;line-height:17px;font-size:12.7px;color:#e4e4e4;letter-spacing:-0.308px;">Configured</span>
<span class="t" style="left:228.50px;top:407.00px;height:20px;line-height:20px;font-size:15.2px;color:#ededed;font-weight:bold;letter-spacing:0.313px;">Logo Customization</span>
<span class="t" style="left:923.98px;top:409.00px;height:17px;line-height:17px;font-size:12.7px;color:#e4e4e4;letter-spacing:-0.308px;">Configured</span>
<span class="t" style="left:228.50px;top:457.00px;height:20px;line-height:20px;font-size:15.2px;color:#ededed;font-weight:bold;letter-spacing:0.292px;">Email Domain Whitelist</span>
<span class="t" style="left:923.98px;top:459.00px;height:17px;line-height:17px;font-size:12.7px;color:#e4e4e4;letter-spacing:-0.308px;">Configured</span>
<span class="t" style="left:230.20px;top:507.00px;height:20px;line-height:20px;font-size:15.2px;color:#ededed;font-weight:bold;letter-spacing:0.193px;">Temporary Login Lock</span>
<span class="t" style="left:923.98px;top:509.00px;height:17px;line-height:17px;font-size:12.7px;color:#e4e4e4;letter-spacing:-0.308px;">Configured</span>
<span class="t" style="left:228.50px;top:556.00px;height:20px;line-height:20px;font-size:15.2px;color:#ededed;font-weight:bold;letter-spacing:0.258px;">Enforce Password Policy</span>
<span class="t" style="left:923.98px;top:559.00px;height:17px;line-height:17px;font-size:12.7px;color:#e4e4e4;letter-spacing:-0.308px;">Configured</span>
<span class="t" style="left:228.50px;top:606.00px;height:20px;line-height:20px;font-size:15.2px;color:#ededed;font-weight:bold;letter-spacing:0.271px;">Return on Investment (ROI) Configuration</span>
<span class="t" style="left:923.98px;top:608.00px;height:17px;line-height:17px;font-size:12.7px;color:#e4e4e4;letter-spacing:-0.308px;">Configured</span>
<span class="t" style="left:229.64px;top:656.00px;height:20px;line-height:20px;font-size:15.2px;color:#ededed;font-weight:bold;letter-spacing:0.106px;">SLA List</span>
<span class="t" style="left:923.98px;top:658.00px;height:17px;line-height:17px;font-size:12.7px;color:#e4e4e4;letter-spacing:-0.308px;">Configured</span>
<span class="t" style="left:229.00px;top:706.00px;height:20px;line-height:20px;font-size:15.2px;color:#ededed;font-weight:bold;letter-spacing:0.377px;">Web Config</span>
<span class="t" style="left:883.49px;top:708.00px;height:17px;line-height:17px;font-size:12.7px;color:#e4e4e4;letter-spacing:-0.317px;">11 Field(s) Missing</span>
<span class="t" style="left:228.50px;top:755.00px;height:20px;line-height:20px;font-size:15.2px;color:#ededed;font-weight:bold;letter-spacing:0.290px;">Date/Time Format</span>
<span class="t" style="left:923.98px;top:758.00px;height:17px;line-height:17px;font-size:12.7px;color:#e4e4e4;letter-spacing:-0.308px;">Configured</span>
<span class="t" style="left:229.64px;top:805.00px;height:20px;line-height:20px;font-size:15.2px;color:#ededed;font-weight:bold;letter-spacing:0.232px;">SMTP Server and Email</span>
<span class="t" style="left:888.66px;top:807.00px;height:17px;line-height:17px;font-size:12.7px;color:#e4e4e4;letter-spacing:-0.279px;">4 Field(s) Missing</span>
<span class="t" style="left:229.64px;top:855.00px;height:20px;line-height:20px;font-size:15.2px;color:#ededed;font-weight:bold;letter-spacing:0.214px;">Sorting Options</span>
<span class="t" style="left:923.98px;top:857.00px;height:17px;line-height:17px;font-size:12.7px;color:#e4e4e4;letter-spacing:-0.308px;">Configured</span>
<span class="t" style="left:229.50px;top:905.00px;height:20px;line-height:20px;font-size:15.2px;color:#ededed;font-weight:bold;letter-spacing:0.230px;">Update Mitre Tactics and Techniques</span>
<span class="t" style="left:228.50px;top:954.00px;height:20px;line-height:20px;font-size:15.2px;color:#ededed;font-weight:bold;letter-spacing:0.296px;">Playbook Input Method</span>
<span class="t" style="left:923.98px;top:956.00px;height:17px;line-height:17px;font-size:12.7px;color:#e4e4e4;letter-spacing:-0.308px;">Configured</span>
<span class="t" style="left:1132.00px;top:258.00px;height:20px;line-height:20px;font-size:15.4px;color:#fff;font-weight:bold;letter-spacing:0.202px;">Login Authentication</span>
<span class="t" style="left:1132.98px;top:280.00px;height:17px;line-height:17px;font-size:13.2px;color:#d9d9d9;letter-spacing:0.268px;">Configure login authentication for user and site</span>
<span class="t" style="left:1171.05px;top:329.00px;height:17px;line-height:17px;font-size:12.7px;color:#fff;font-weight:bold;letter-spacing:-0.449px;">Certificate</span>
<span class="t" style="left:1457.75px;top:329.00px;height:17px;line-height:17px;font-size:12.7px;color:#fff;font-weight:bold;letter-spacing:-0.904px;">Site</span>
<span class="t" style="left:1722.81px;top:329.00px;height:17px;line-height:17px;font-size:12.7px;color:#fff;font-weight:bold;letter-spacing:-0.545px;">User</span>
<span class="t" style="left:1091.32px;top:370.00px;height:17px;line-height:17px;font-size:12.9px;color:#4b5262;">Search by certificate</span>
<span class="t" style="left:1752.60px;top:373.00px;height:17px;line-height:17px;font-size:12.9px;color:#fff;">+ New Certificate</span>
<span class="t" style="left:1076.20px;top:402.00px;height:17px;line-height:17px;font-size:12.9px;color:#efefef;letter-spacing:0.022px;">Default Login Method</span>
<span class="t" style="left:1085.02px;top:432.00px;height:17px;line-height:17px;font-size:12.9px;color:#f2f2f2;letter-spacing:-0.010px;">General Authentication</span>
<span class="t" style="left:1086.20px;top:472.00px;height:16px;line-height:16px;font-size:12.5px;color:#fff;font-weight:bold;letter-spacing:-0.503px;">Auth Name</span>
<span class="t" style="left:1391.98px;top:472.00px;height:16px;line-height:16px;font-size:12.5px;color:#fff;font-weight:bold;letter-spacing:-0.492px;">Usage</span>
<span class="t" style="left:1583.60px;top:472.00px;height:16px;line-height:16px;font-size:12.5px;color:#fff;font-weight:bold;letter-spacing:-0.427px;">Auth Parameters</span>
<span class="t" style="left:1084.34px;top:507.00px;height:17px;line-height:17px;font-size:12.9px;color:#ececec;letter-spacing:-0.018px;">General Authentication</span>
<span class="t" style="left:1395.70px;top:507.00px;height:17px;line-height:17px;font-size:12.9px;color:#ececec;">7 Users 0 Sites</span>
<span class="t" style="left:1600.74px;top:507.00px;height:17px;line-height:17px;font-size:12.9px;color:#fff;letter-spacing:-0.009px;">Advanced Settings</span>
<span class="t" style="left:1083.64px;top:551.00px;height:17px;line-height:17px;font-size:12.9px;color:#ececec;letter-spacing:0.078px;">SAML-ADFS</span>
<span class="t" style="left:1395.70px;top:551.00px;height:17px;line-height:17px;font-size:12.9px;color:#ececec;">0 Users 2 Sites</span>
<span class="t" style="left:1600.74px;top:551.00px;height:17px;line-height:17px;font-size:12.9px;color:#fff;letter-spacing:-0.009px;">Advanced Settings</span>
<span class="t" style="left:1083.64px;top:595.00px;height:17px;line-height:17px;font-size:12.9px;color:#ececec;letter-spacing:0.050px;">SSO-MSAD</span>
<span class="t" style="left:1395.70px;top:595.00px;height:17px;line-height:17px;font-size:12.9px;color:#ececec;">0 Users 2 Sites</span>
<span class="t" style="left:1600.74px;top:594.00px;height:17px;line-height:17px;font-size:12.9px;color:#fff;letter-spacing:-0.009px;">Advanced Settings</span>
<span class="t" style="left:1083.78px;top:639.00px;height:17px;line-height:17px;font-size:12.9px;color:#ececec;letter-spacing:0.020px;">SAML-OKTA</span>
<span class="t" style="left:1395.70px;top:639.00px;height:17px;line-height:17px;font-size:12.9px;color:#ececec;">0 Users 0 Sites</span>
<span class="t" style="left:1600.74px;top:638.00px;height:17px;line-height:17px;font-size:12.9px;color:#fff;letter-spacing:-0.009px;">Advanced Settings</span>
<span class="t" style="left:1084.20px;top:682.00px;height:17px;line-height:17px;font-size:12.9px;color:#ececec;letter-spacing:-0.019px;">ddd</span>
<span class="t" style="left:1395.70px;top:682.00px;height:17px;line-height:17px;font-size:12.9px;color:#ececec;">0 Users 0 Sites</span>
<span class="t" style="left:1600.74px;top:682.00px;height:17px;line-height:17px;font-size:12.9px;color:#fff;letter-spacing:-0.009px;">Advanced Settings</span>
<span class="t" style="left:1083.64px;top:726.00px;height:17px;line-height:17px;font-size:12.9px;color:#ececec;letter-spacing:0.083px;">msad</span>
<span class="t" style="left:1395.70px;top:726.00px;height:17px;line-height:17px;font-size:12.9px;color:#ececec;">0 Users 0 Sites</span>
<span class="t" style="left:1600.74px;top:725.00px;height:17px;line-height:17px;font-size:12.9px;color:#fff;letter-spacing:-0.009px;">Advanced Settings</span>
<span class="t" style="left:1084.20px;top:770.00px;height:17px;line-height:17px;font-size:12.9px;color:#ececec;letter-spacing:0.055px;">zzzz</span>
<span class="t" style="left:1395.70px;top:770.00px;height:17px;line-height:17px;font-size:12.9px;color:#ececec;">0 Users 0 Sites</span>
<span class="t" style="left:1600.74px;top:769.00px;height:17px;line-height:17px;font-size:12.9px;color:#fff;letter-spacing:-0.009px;">Advanced Settings</span>
<span class="t" style="left:1084.20px;top:813.00px;height:17px;line-height:17px;font-size:12.9px;color:#ececec;letter-spacing:-0.669px;">aaa</span>
<span class="t" style="left:1395.70px;top:813.00px;height:17px;line-height:17px;font-size:12.9px;color:#ececec;">0 Users 0 Sites</span>
<span class="t" style="left:1600.74px;top:813.00px;height:17px;line-height:17px;font-size:12.9px;color:#fff;letter-spacing:-0.009px;">Advanced Settings</span>
<span class="t" style="left:1172.30px;top:857.00px;height:17px;line-height:17px;font-size:13.2px;color:#2b7bf7;font-weight:bold;">1</span>
<span class="t" style="left:1752.50px;top:857.00px;height:17px;line-height:17px;font-size:12.9px;color:#ececec;letter-spacing:-0.041px;">1 - 8 of 8 items</span>
</div>
</body></html>
